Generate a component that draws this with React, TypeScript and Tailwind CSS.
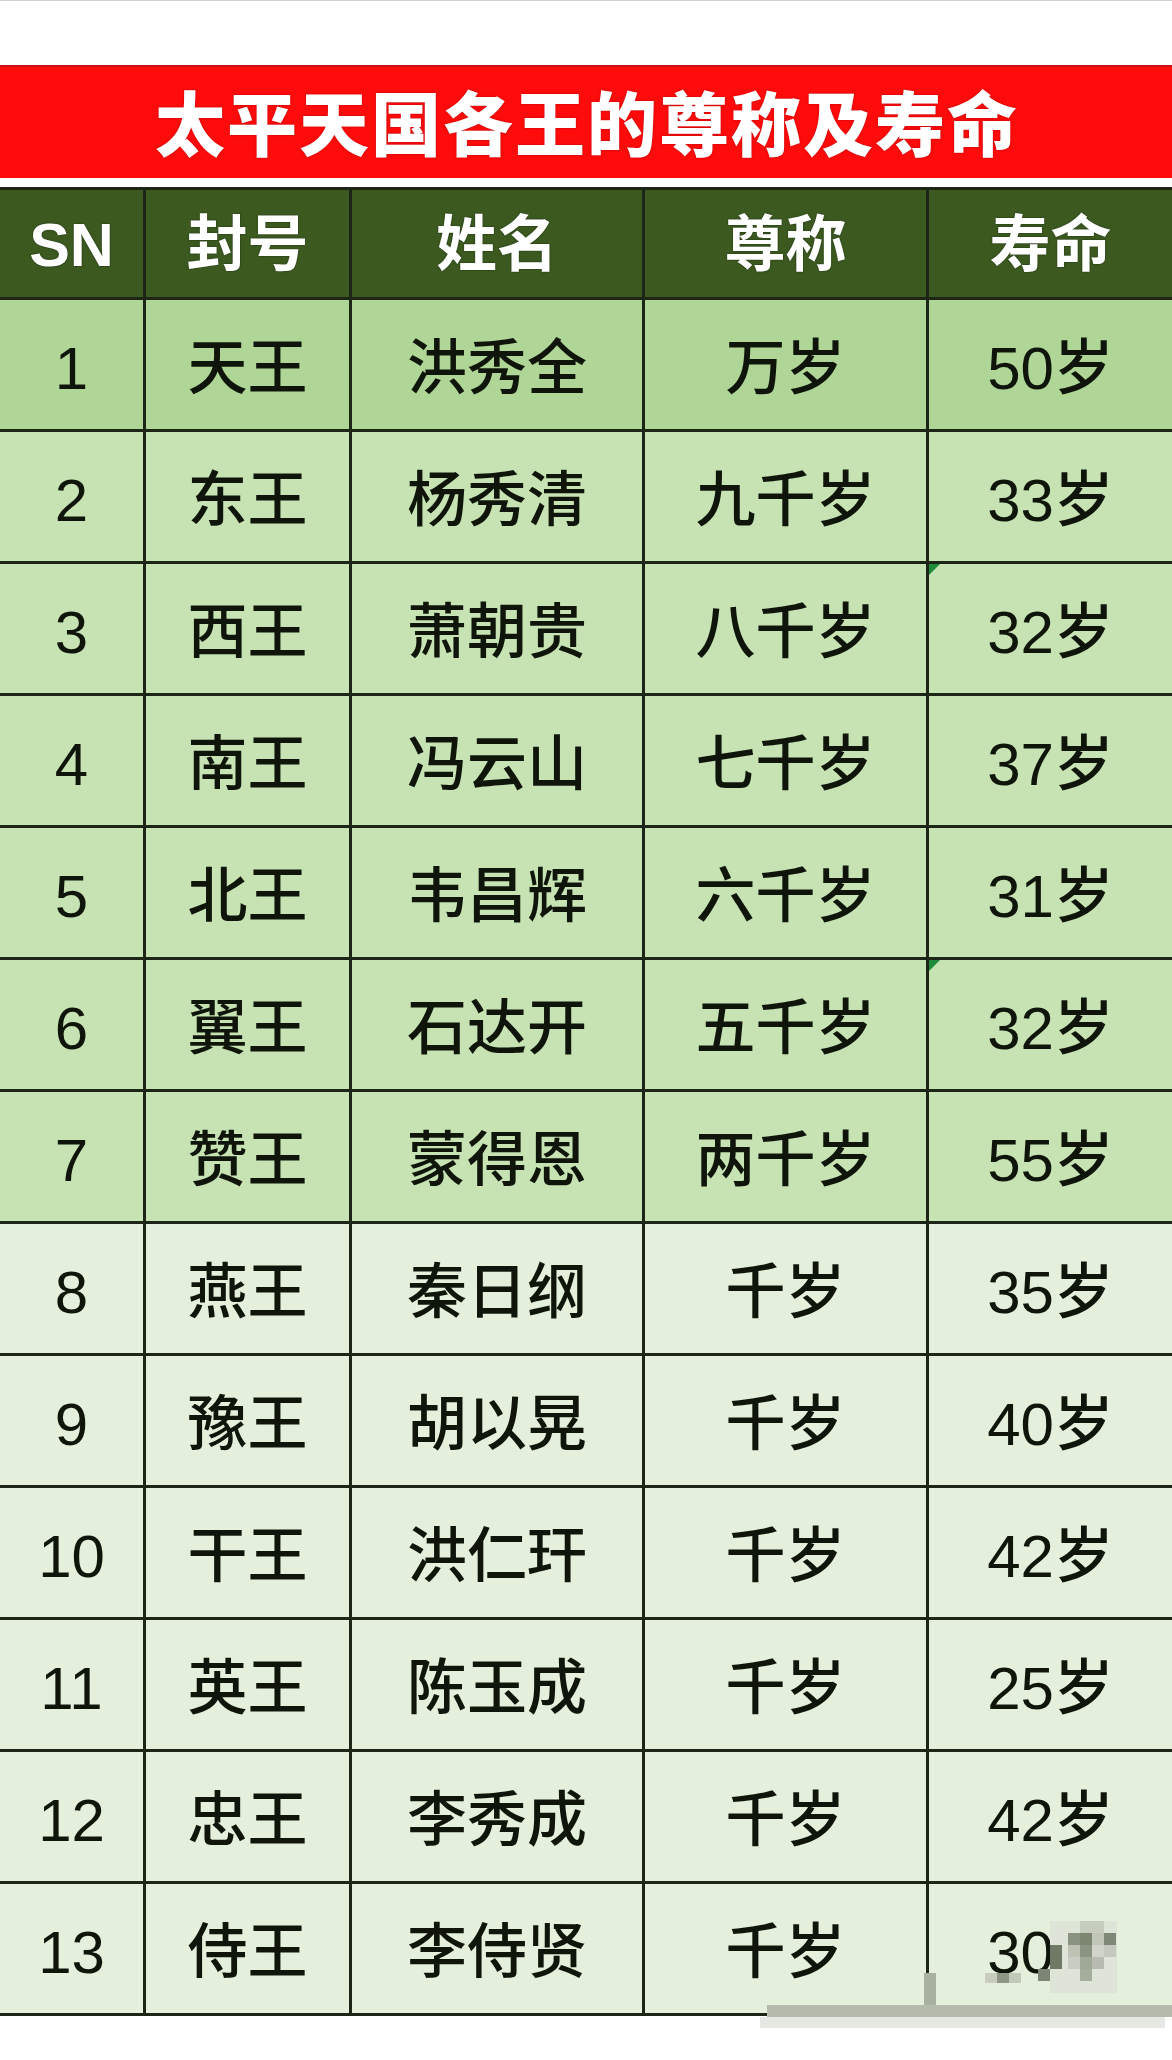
const FONT = "font-['Liberation_Sans','Noto_Sans_CJK_SC',sans-serif]";

type Row = [string, string, string, string, string];

const ROWS: Row[] = [
  ["1", "天王", "洪秀全", "万岁", "50岁"],
  ["2", "东王", "杨秀清", "九千岁", "33岁"],
  ["3", "西王", "萧朝贵", "八千岁", "32岁"],
  ["4", "南王", "冯云山", "七千岁", "37岁"],
  ["5", "北王", "韦昌辉", "六千岁", "31岁"],
  ["6", "翼王", "石达开", "五千岁", "32岁"],
  ["7", "赞王", "蒙得恩", "两千岁", "55岁"],
  ["8", "燕王", "秦日纲", "千岁", "35岁"],
  ["9", "豫王", "胡以晃", "千岁", "40岁"],
  ["10", "干王", "洪仁玕", "千岁", "42岁"],
  ["11", "英王", "陈玉成", "千岁", "25岁"],
  ["12", "忠王", "李秀成", "千岁", "42岁"],
  ["13", "侍王", "李侍贤", "千岁", "30岁"],
];

const HEADERS = ["SN", "封号", "姓名", "尊称", "寿命"];

// rows 3 and 6 carry the little green "number as text" flag in the last column
const FLAGGED = new Set([2, 5]);

function rowBg(i: number) {
  if (i === 0) return "bg-[#afd697]";
  if (i < 7) return "bg-[#c7e3b3]";
  return "bg-[#e4f0db]";
}

// pixelated watermark blocks over the bottom-right corner: [left, top, w, h, colour]
const BLOCKS: [number, number, number, number, string][] = [
  [1050, 1920, 67, 72, "#dfe4d8"],
  [1080, 1920, 24, 12, "#c6ccbe"],
  [1068, 1932, 12, 12, "#8a9380"],
  [1080, 1932, 12, 12, "#7c8670"],
  [1092, 1932, 12, 12, "#c0c6b8"],
  [1104, 1932, 12, 12, "#7f8875"],
  [1050, 1944, 12, 24, "#6f7a66"],
  [1068, 1944, 12, 12, "#bcc2b4"],
  [1080, 1944, 12, 12, "#8b9482"],
  [1092, 1944, 12, 12, "#d0d4ca"],
  [1104, 1944, 12, 12, "#c4c8be"],
  [1068, 1956, 12, 12, "#c8ccc2"],
  [1080, 1956, 12, 12, "#a0a898"],
  [1092, 1956, 12, 12, "#b8bcb0"],
  [985, 1972, 12, 10, "#c8ccbe"],
  [997, 1972, 12, 10, "#8e9686"],
  [1009, 1972, 12, 10, "#c2c8ba"],
  [1038, 1968, 12, 12, "#7d8674"],
  [1080, 1968, 12, 12, "#a5ad9c"],
  [924, 1972, 12, 32, "#a8b0a0"],
  [767, 2004, 405, 12, "#b4bbac"],
  [760, 2016, 405, 11, "#e6e8e4"],
];

export default function App() {
  return (
    <div className={`relative h-[2060px] w-[1172px] overflow-hidden border-t border-[#d2d2d2] bg-white ${FONT}`}>
      <div className="mt-[64px] flex h-[113px] items-center justify-center border-t-2 border-[#c81616] bg-[#fe0b0b]">
        <h1 className="pt-[8px] pl-[2px] text-[70px] leading-none font-black tracking-[2px] text-white [text-shadow:0_0_2px_rgba(90,0,0,0.5)]">
          太平天国各王的尊称及寿命
        </h1>
      </div>

      <div className="mt-[9px] grid grid-cols-[143px_203px_290px_281px_1fr] grid-rows-[107px] auto-rows-[129px] gap-[3px] border-y-[3px] border-[#1d2616] bg-[#1d2616]">
        {HEADERS.map((h) => (
          <div
            key={h}
            className="flex items-center justify-center bg-[#3c5a20] pt-[4px] text-[61px] leading-none font-bold text-white [text-shadow:0_0_2px_rgba(0,0,0,0.6)]"
          >
            {h}
          </div>
        ))}
        {ROWS.map((row, i) =>
          row.map((cell, j) => (
            <div
              key={`${i}-${j}`}
              className={`relative flex items-center justify-center pt-[8px] text-[60px] leading-none font-medium text-[#0f150b] ${rowBg(i)}`}
            >
              {j === 4 && FLAGGED.has(i) ? (
                <span className="absolute top-0 left-0 h-[11px] w-[11px] bg-[#1f8a3a] [clip-path:polygon(0_0,100%_0,0_100%)]" />
              ) : null}
              {cell}
            </div>
          )),
        )}
      </div>

      {BLOCKS.map(([x, y, w, h, c], k) => (
        <div
          key={k}
          className="absolute"
          style={{ left: x, top: y, width: w, height: h, background: c }}
        />
      ))}
    </div>
  );
}
